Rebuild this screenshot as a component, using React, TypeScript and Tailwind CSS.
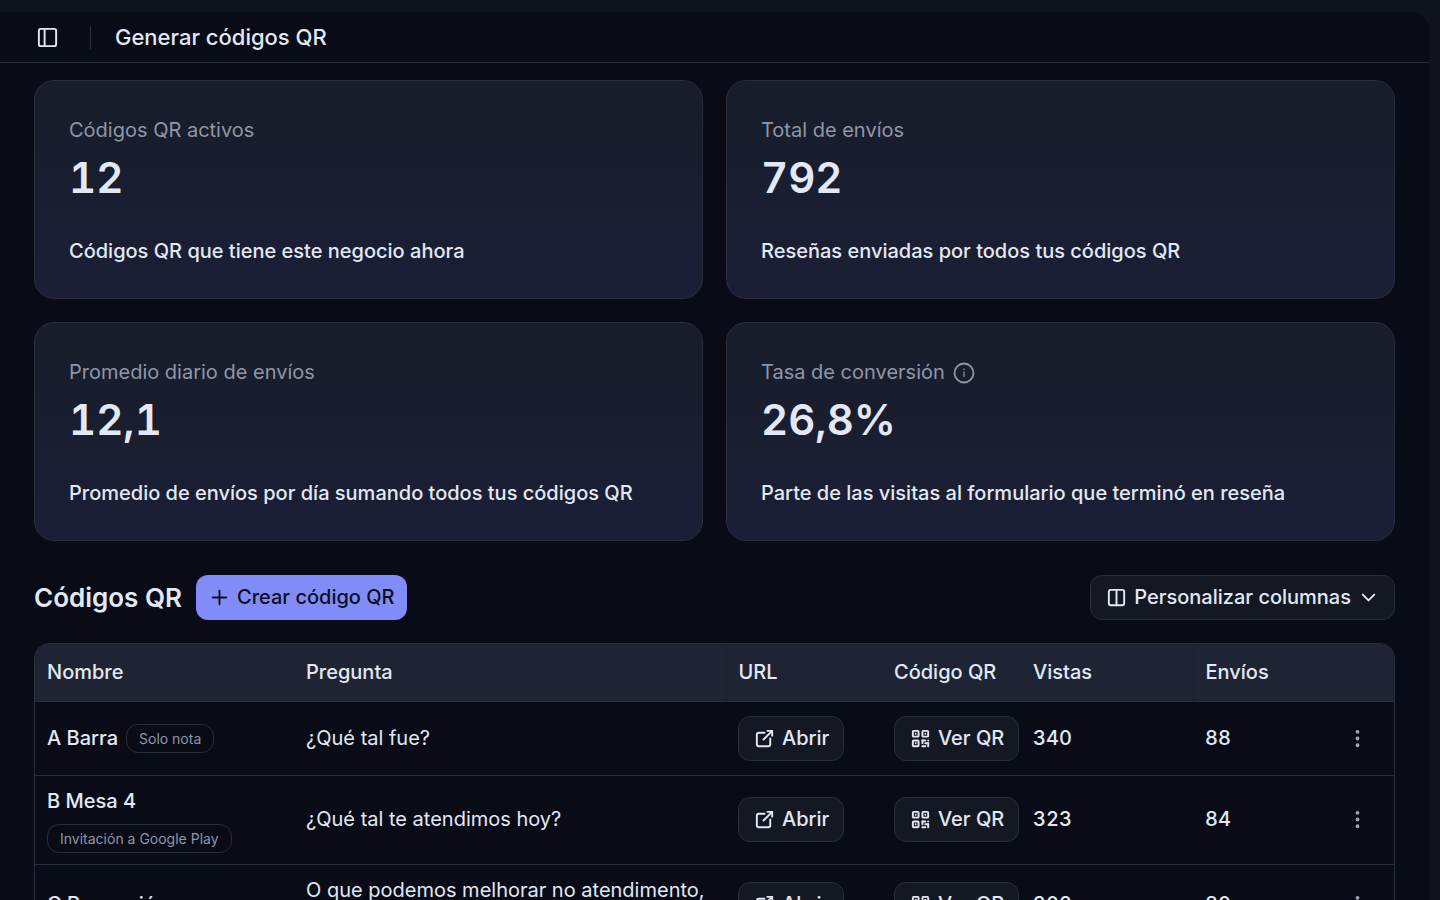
import type { ReactNode } from 'react'
import { PanelLeft } from 'lucide-react'
import { TbChevronDown, TbDotsVertical, TbExternalLink, TbLayoutColumns, TbPlus, TbQrcode } from 'react-icons/tb'

type Stat = { label: string; value: string; note: string; info?: boolean }
type QrRow = { name: string; badge?: string; question: string; views: number; sends: number }

const stats: Stat[] = [
  { label: 'Códigos QR activos', value: '12', note: 'Códigos QR que tiene este negocio ahora' },
  { label: 'Total de envíos', value: '792', note: 'Reseñas enviadas por todos tus códigos QR' },
  { label: 'Promedio diario de envíos', value: '12,1', note: 'Promedio de envíos por día sumando todos tus códigos QR' },
  { label: 'Tasa de conversión', value: '26,8%', note: 'Parte de las visitas al formulario que terminó en reseña', info: true },
]

const rows: QrRow[] = [
  { name: 'A Barra', badge: 'Solo nota', question: '¿Qué tal fue?', views: 340, sends: 88 },
  { name: 'B Mesa 4', badge: 'Invitación a Google Play', question: '¿Qué tal te atendimos hoy?', views: 323, sends: 84 },
  { name: 'C Recepción', question: 'O que podemos melhorar no atendimento, na sua opinião?', views: 302, sends: 80 },
]

const outline =
  'inline-flex h-[45px] items-center gap-1.5 rounded-xl border border-[#292e3a] bg-[#141823] font-medium whitespace-nowrap'

// thin "i" inside a ring, lighter than the stock info icons
function InfoIcon() {
  return (
    <svg width="22" height="22" viewBox="0 0 22 22" fill="none" stroke="currentColor" aria-hidden="true">
      <circle cx="11" cy="11" r="9.5" strokeWidth="1.8" />
      <path d="M11 9.4v5.6" strokeWidth="1.2" />
      <path d="M11 6.6v1.3" strokeWidth="1.2" />
    </svg>
  )
}

function StatCard({ label, value, note, info }: Stat) {
  return (
    <section className="rounded-[20px] border border-[#2a2f3b] bg-linear-to-b from-[#171d2a] to-[#1b1f36] px-[34px] pt-[35px] pb-8">
      <div className="flex h-[29px] items-center gap-2 text-[#8f96a5]">
        <h2>{label}</h2>
        {info && (
          <button type="button" aria-label="Más información">
            <InfoIcon />
          </button>
        )}
      </div>
      <p className="mt-1 text-[42px] leading-[58px] font-semibold tabular-nums">{value}</p>
      <p className="mt-[30px] leading-[29px] font-medium">{note}</p>
    </section>
  )
}

function Th({ children, className = '' }: { children?: ReactNode; className?: string }) {
  return <th className={`h-[57px] px-3 text-left font-medium whitespace-nowrap ${className}`}>{children}</th>
}

export default function App() {
  return (
    <div className="h-screen overflow-hidden bg-[#0e131d] pt-3 pr-[11px] font-[Inter,sans-serif] text-[20px] leading-[29px] text-[#e2e8f5]">
      <main className="h-full overflow-hidden rounded-tr-[17px] bg-[#090c17]">
        <header className="flex h-[51px] items-center border-b border-[#292e3a] pl-9">
          <button type="button" aria-label="Alternar barra lateral">
            <PanelLeft size={23} />
          </button>
          <div className="ml-[31px] h-[23px] w-px bg-[#292e3a]" />
          <h1 className="ml-6 text-[22px] font-medium">Generar códigos QR</h1>
        </header>

        <div className="px-[34px] pt-[17px]">
          <div className="grid grid-cols-2 gap-[23px]">
            {stats.map((s) => (
              <StatCard key={s.label} {...s} />
            ))}
          </div>

          <div className="mt-[34px] flex items-center">
            <h2 className="text-[26px] font-semibold">Códigos QR</h2>
            <button
              type="button"
              className="ml-3.5 flex h-[45px] items-center gap-1.5 rounded-xl bg-[#818cf8] px-3 font-medium text-[#0b0f1c]"
            >
              <TbPlus size={23} />
              Crear código QR
            </button>
            <button type="button" className={`${outline} ml-auto px-3.5`}>
              <TbLayoutColumns size={23} />
              Personalizar columnas
              <TbChevronDown size={23} />
            </button>
          </div>

          <div className="mt-[23px] overflow-hidden rounded-t-[15px] border border-[#292e3a]">
            <table className="w-full table-fixed border-collapse">
              <colgroup>
                <col className="w-[259px]" />
                <col />
                <col className="w-[156px]" />
                <col className="w-[139px]" />
                <col className="w-[172px]" />
                <col className="w-[128px]" />
                <col className="w-[73px]" />
              </colgroup>
              <thead className="border-b border-[#292e3a] bg-[#1e2433]">
                <tr>
                  <Th>Nombre</Th>
                  <Th>Pregunta</Th>
                  <Th className="border-l border-[#191f2c]">URL</Th>
                  <Th>Código QR</Th>
                  <Th>Vistas</Th>
                  <Th className="border-l border-[#191f2c]">Envíos</Th>
                  <Th />
                </tr>
              </thead>
              <tbody>
                {rows.map((r) => (
                  <tr key={r.name} className="h-[74px] border-b border-[#292e3a]">
                    <td className="px-3 py-[11px]">
                      <div className="flex flex-wrap items-center gap-2">
                        <span className="font-medium">{r.name}</span>
                        {r.badge && (
                          <span className="inline-flex h-[29px] items-center rounded-xl border border-[#292e3a] px-3 text-[14px] whitespace-nowrap text-[#8f96a5]">
                            {r.badge}
                          </span>
                        )}
                      </div>
                    </td>
                    <td className="px-3 py-[11px]">{r.question}</td>
                    <td className="px-3">
                      <a href="#abrir" className={`${outline} px-3.5`}>
                        <TbExternalLink size={23} />
                        Abrir
                      </a>
                    </td>
                    <td className="px-3">
                      <button type="button" className={`${outline} px-3.5`}>
                        <TbQrcode size={23} />
                        Ver QR
                      </button>
                    </td>
                    <td className="px-3 font-medium tabular-nums">{r.views}</td>
                    <td className="px-3 font-medium tabular-nums">{r.sends}</td>
                    <td className="px-3">
                      <button type="button" aria-label="Abrir menú" className="flex h-[45px] w-full items-center justify-center text-[#a0a7b6]">
                        <TbDotsVertical size={23} />
                      </button>
                    </td>
                  </tr>
                ))}
              </tbody>
            </table>
          </div>
        </div>
      </main>
    </div>
  )
}
